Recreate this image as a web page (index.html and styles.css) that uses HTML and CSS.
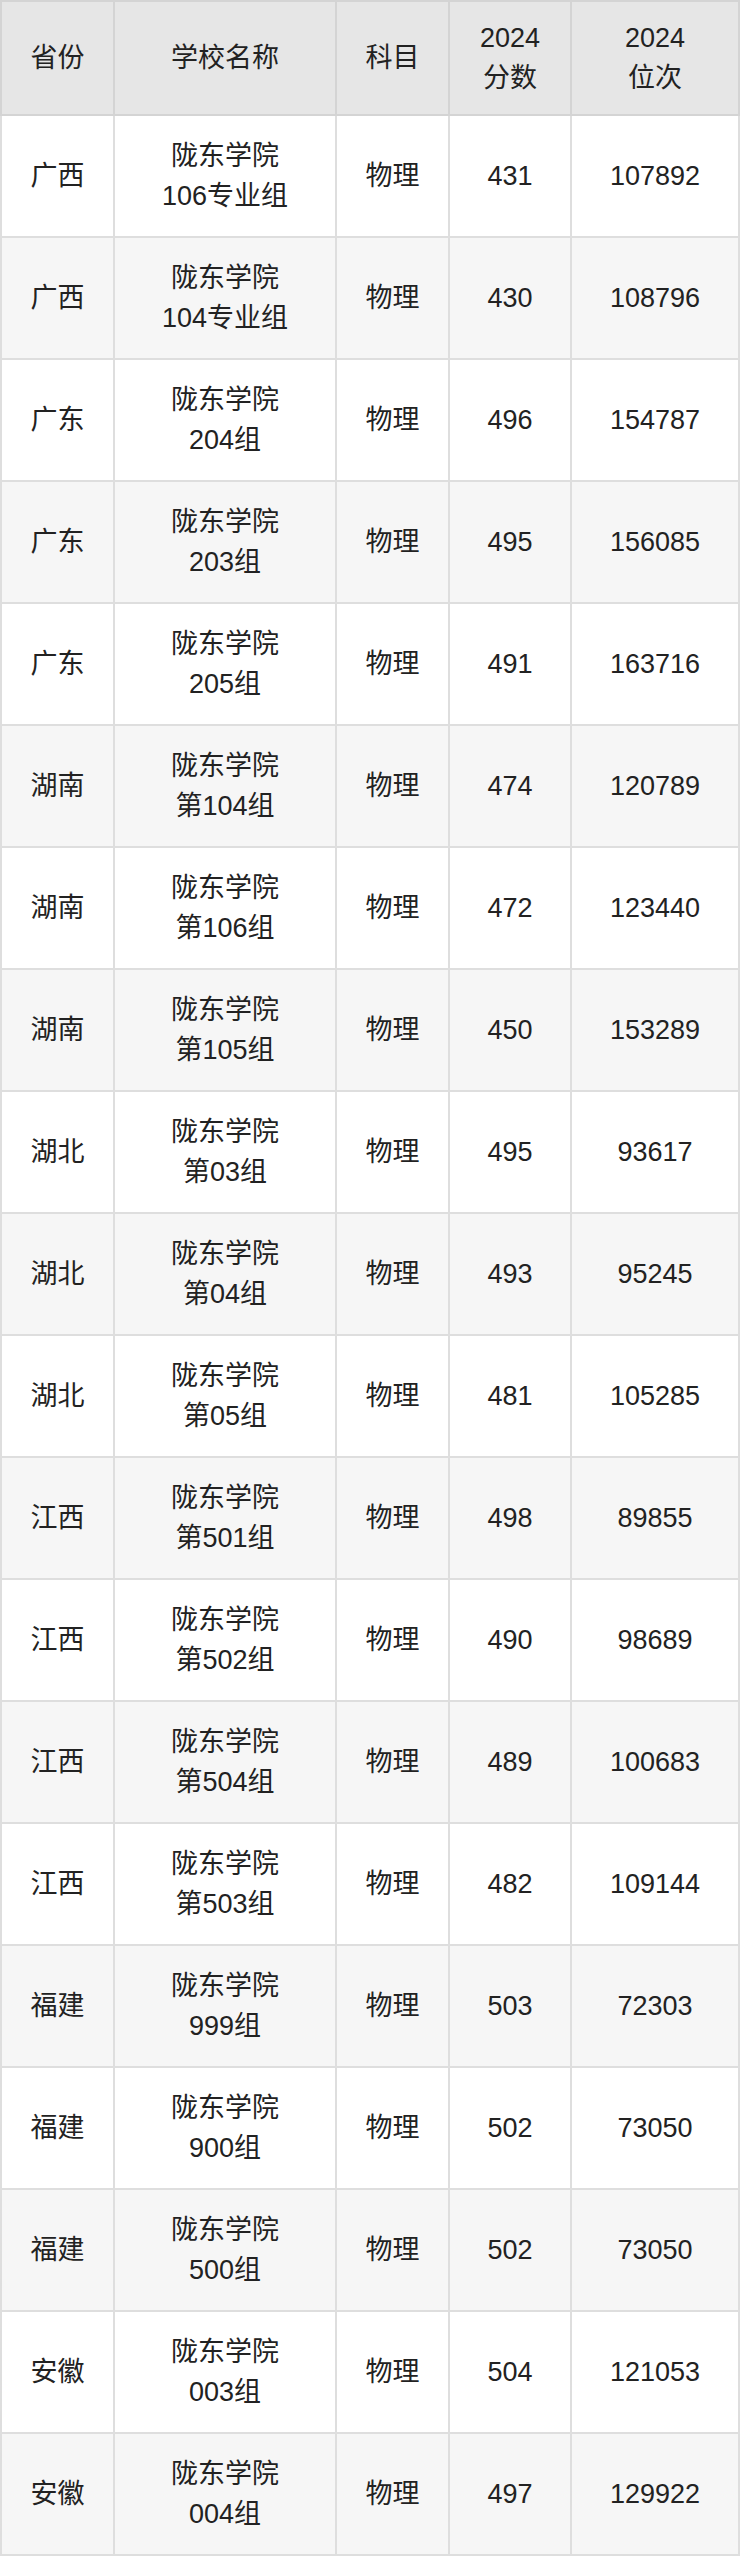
FILE: index.html
```html
<!DOCTYPE html>
<html lang="zh">
<head>
<meta charset="utf-8">
<title>陇东学院 2024 录取分数</title>
<link rel="stylesheet" href="styles.css">
</head>
<body>
<div class="table">
  <div class="head">
    <div class="cell">省份</div>
    <div class="cell">学校名称</div>
    <div class="cell">科目</div>
    <div class="cell">2024<br>分数</div>
    <div class="cell">2024<br>位次</div>
  </div>
  <div class="body">
    <div class="row"><div class="cell">广西</div><div class="cell">陇东学院<br>106专业组</div><div class="cell">物理</div><div class="cell">431</div><div class="cell">107892</div></div>
    <div class="row alt"><div class="cell">广西</div><div class="cell">陇东学院<br>104专业组</div><div class="cell">物理</div><div class="cell">430</div><div class="cell">108796</div></div>
    <div class="row"><div class="cell">广东</div><div class="cell">陇东学院<br>204组</div><div class="cell">物理</div><div class="cell">496</div><div class="cell">154787</div></div>
    <div class="row alt"><div class="cell">广东</div><div class="cell">陇东学院<br>203组</div><div class="cell">物理</div><div class="cell">495</div><div class="cell">156085</div></div>
    <div class="row"><div class="cell">广东</div><div class="cell">陇东学院<br>205组</div><div class="cell">物理</div><div class="cell">491</div><div class="cell">163716</div></div>
    <div class="row alt"><div class="cell">湖南</div><div class="cell">陇东学院<br>第104组</div><div class="cell">物理</div><div class="cell">474</div><div class="cell">120789</div></div>
    <div class="row"><div class="cell">湖南</div><div class="cell">陇东学院<br>第106组</div><div class="cell">物理</div><div class="cell">472</div><div class="cell">123440</div></div>
    <div class="row alt"><div class="cell">湖南</div><div class="cell">陇东学院<br>第105组</div><div class="cell">物理</div><div class="cell">450</div><div class="cell">153289</div></div>
    <div class="row"><div class="cell">湖北</div><div class="cell">陇东学院<br>第03组</div><div class="cell">物理</div><div class="cell">495</div><div class="cell">93617</div></div>
    <div class="row alt"><div class="cell">湖北</div><div class="cell">陇东学院<br>第04组</div><div class="cell">物理</div><div class="cell">493</div><div class="cell">95245</div></div>
    <div class="row"><div class="cell">湖北</div><div class="cell">陇东学院<br>第05组</div><div class="cell">物理</div><div class="cell">481</div><div class="cell">105285</div></div>
    <div class="row alt"><div class="cell">江西</div><div class="cell">陇东学院<br>第501组</div><div class="cell">物理</div><div class="cell">498</div><div class="cell">89855</div></div>
    <div class="row"><div class="cell">江西</div><div class="cell">陇东学院<br>第502组</div><div class="cell">物理</div><div class="cell">490</div><div class="cell">98689</div></div>
    <div class="row alt"><div class="cell">江西</div><div class="cell">陇东学院<br>第504组</div><div class="cell">物理</div><div class="cell">489</div><div class="cell">100683</div></div>
    <div class="row"><div class="cell">江西</div><div class="cell">陇东学院<br>第503组</div><div class="cell">物理</div><div class="cell">482</div><div class="cell">109144</div></div>
    <div class="row alt"><div class="cell">福建</div><div class="cell">陇东学院<br>999组</div><div class="cell">物理</div><div class="cell">503</div><div class="cell">72303</div></div>
    <div class="row"><div class="cell">福建</div><div class="cell">陇东学院<br>900组</div><div class="cell">物理</div><div class="cell">502</div><div class="cell">73050</div></div>
    <div class="row alt"><div class="cell">福建</div><div class="cell">陇东学院<br>500组</div><div class="cell">物理</div><div class="cell">502</div><div class="cell">73050</div></div>
    <div class="row"><div class="cell">安徽</div><div class="cell">陇东学院<br>003组</div><div class="cell">物理</div><div class="cell">504</div><div class="cell">121053</div></div>
    <div class="row alt"><div class="cell">安徽</div><div class="cell">陇东学院<br>004组</div><div class="cell">物理</div><div class="cell">497</div><div class="cell">129922</div></div>
  </div>
</div>
</body>
</html>
```

FILE: styles.css
```css
html, body {
  margin: 0;
  padding: 0;
  background: #ffffff;
}

.table {
  width: 740px;
  font-family: "Liberation Sans", "Noto Sans CJK SC", sans-serif;
  font-size: 27px;
  line-height: 40px;
  color: #222222;
}

.head,
.row {
  display: grid;
  grid-template-columns: 111px 220px 111px 120px 166px;
  column-gap: 2px;
}

.head {
  background: #d4d4d4;
  padding: 2px;
}

.head .cell {
  background: #e6e6e6;
  height: 112px;
}

.body {
  background: #dedede;
  padding: 0 2px 2px;
  display: flex;
  flex-direction: column;
  row-gap: 2px;
}

.cell {
  display: flex;
  align-items: center;
  justify-content: center;
  text-align: center;
  box-sizing: border-box;
}

.row .cell {
  background: #ffffff;
  height: 120px;
}

.row.alt .cell {
  background: #f6f6f6;
}
```
